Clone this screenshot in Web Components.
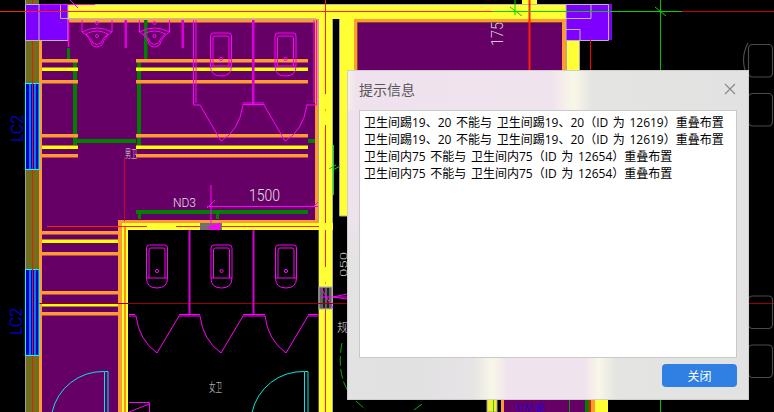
<!DOCTYPE html>
<html lang="zh">
<head>
<meta charset="utf-8">
<title>提示信息</title>
<style>
  html, body { margin: 0; padding: 0; background: #000; }
  body { width: 774px; height: 412px; overflow: hidden; position: relative; font-family: "Open Sans", "Noto Sans CJK SC", sans-serif; }
</style>
</head>
<body>
<cad-drawing></cad-drawing>
<notice-dialog>
  <span slot="title">提示信息</span>
  <message-line>卫生间踢19、20 不能与 卫生间踢19、20（ID 为 12619）重叠布置</message-line>
  <message-line>卫生间踢19、20 不能与 卫生间踢19、20（ID 为 12619）重叠布置</message-line>
  <message-line>卫生间内75 不能与 卫生间内75（ID 为 12654）重叠布置</message-line>
  <message-line>卫生间内75 不能与 卫生间内75（ID 为 12654）重叠布置</message-line>
  <blue-button slot="actions">关闭</blue-button>
</notice-dialog>

<script>
class CadDrawing extends HTMLElement {
  constructor() {
    super()
    this.attachShadow({ mode: 'open' })
    this.shadowRoot.innerHTML = /* html */ `
      <style>
        :host { display: block; width: 774px; height: 412px; }
        svg { display: block; }
        text { font-family: Roboto, "Noto Sans CJK SC", sans-serif; font-weight: 300; }
        .thin { fill: none; stroke: #ff00ff; stroke-width: 1; }
        .orange { fill: #ff9933; }
        .yellow { fill: #ffff00; }
        .wall { fill: #ffff33; }
        .room { fill: #660066; }
        .green { fill: #008000; }
      </style>
      <svg width="774" height="412" viewBox="0 0 774 412">
        <defs>
          <g id="win">
            <rect x="25.5" y="0.5" width="13.5" height="86" fill="#0000c8" stroke="#00ffff"/>
            <path d="M30 0v86M35 0v86" stroke="#00ffff"/>
            <path d="M32.5 0v86" stroke="#ff0033"/>
          </g>
          <g id="urinal" class="thin">
            <path d="M-10.5 3a3 3 0 0 1 3-3h15a3 3 0 0 1 3 3v30q0 10-10.500 10t-10.500-10z"/>
            <path d="M-10.500 33h21"/>
            <path d="M-8 33v-28a2 2 0 0 1 2-2h12a2 2 0 0 1 2 2v28"/>
            <circle cx="0" cy="26" r="1.600"/>
          </g>
          <g id="sink" class="thin">
            <path d="M-15 0v12M15 0v12"/>
            <path d="M-15 12q15-8 30 0q-7 4-10 13q-5 4-10 0q-3-9-10-13z"/>
            <path d="M-11 14q11-6 22 0q-5 3-7 9q-4 3-8 0q-2-6-7-9z"/>
            <circle cx="0" cy="3" r="1.500"/>
            <circle cx="0" cy="16" r="1.500"/>
          </g>
          <path id="stall" class="thin" d="M0 0q3 24 21 37l22-37"/>
          <path id="stall2" class="thin" d="M0 0l21 36q18-10 22-36"/>
        </defs>

        <rect width="774" height="412" fill="#000"/>

        <!-- left outer wall -->
        <rect x="25" y="0" width="14" height="412" fill="#6f6f1f"/>
        <path d="M25.500 0v412" stroke="#a0a0a0"/>
        <path d="M32.500 0v412" stroke="#e02000"/>
        <rect x="39" y="20" width="3.500" height="392" class="orange"/>

        <!-- upper room -->
        <rect x="42" y="20" width="274" height="200" class="room"/>
        <rect x="42" y="220" width="76" height="192" class="room"/>
        <rect x="68" y="19" width="250" height="3.500" class="orange"/>
        <rect x="315" y="12" width="3.500" height="212" class="orange"/>

        <!-- green stud walls -->
        <rect x="67" y="48" width="3" height="12" class="green"/>
        <rect x="144" y="20" width="3.500" height="40" class="green"/>
        <rect x="73" y="62" width="4" height="83" class="green"/>
        <rect x="137" y="62" width="4" height="86" class="green"/>
        <rect x="77" y="139" width="59" height="4" class="green"/>
        <rect x="308" y="139" width="7" height="4" class="green"/>
        <rect x="136" y="210" width="172" height="4" class="green"/>
        <rect x="138" y="214" width="3" height="5" class="green"/>
        <rect x="216" y="214" width="3" height="5" class="green"/>

        <!-- partition bars -->
        <rect x="42" y="59" width="36" height="3.500" class="orange"/>
        <rect x="136" y="59" width="172" height="3.500" class="orange"/>
        <rect x="42" y="67.500" width="36" height="3.500" class="yellow"/>
        <rect x="136" y="67.500" width="172" height="3.500" class="yellow"/>
        <rect x="42" y="80" width="36" height="3.500" class="orange"/>
        <rect x="136" y="80" width="172" height="3.500" class="orange"/>
        <rect x="42" y="134" width="36" height="3.500" class="orange"/>
        <rect x="136" y="134" width="172" height="3.500" class="orange"/>
        <rect x="42" y="145.500" width="36" height="3.500" class="yellow"/>
        <rect x="136" y="145.500" width="172" height="3.500" class="yellow"/>
        <rect x="42" y="154" width="36" height="3.500" class="orange"/>
        <rect x="136" y="154" width="172" height="3.500" class="orange"/>

        <!-- lower-left bars -->
        <rect x="42" y="231" width="76" height="3.500" class="orange"/>
        <rect x="42" y="239.500" width="76" height="3.500" class="yellow"/>
        <rect x="42" y="252" width="76" height="3.500" class="orange"/>
        <rect x="42" y="291" width="76" height="3.500" class="orange"/>
        <rect x="42" y="303" width="76" height="3.500" class="yellow"/>
        <rect x="42" y="312" width="76" height="3.500" class="orange"/>

        <!-- top wall -->
        <rect x="68" y="4" width="262" height="15" class="wall"/>
        <path d="M68 4.500h262M68 18.500h248" stroke="#b8b8b8"/>
        <rect x="25" y="4" width="43" height="36" fill="#8000ff"/>
        <path d="M25.500 4.500h42.500v36h-42.500zM39 4v36M60.500 4.500v14h7.500" fill="none" stroke="#b8b8b8"/>
        <path d="M40 4.500h55M70 0l8 8" stroke="#ff00ff"/>

        <!-- right wall of left block -->
        <rect x="318.500" y="19" width="14.500" height="393" class="wall"/>
        <path d="M318.500 19v393M332.500 19v393" stroke="#a8a8a8"/>
        <path d="M325.500 0v94M325.500 125v142M325.500 309v103" stroke="#ff2000"/>
        <path d="M325 110h1M325 283h1" stroke="#ff9933" stroke-width="2"/>

        <!-- middle block -->
        <rect x="330" y="4" width="236" height="15" class="wall"/>
        <rect x="339" y="19" width="15" height="197" class="wall"/>
        <path d="M339.500 19v197h8" fill="none" stroke="#a8a8a8"/>
        <rect x="354" y="19" width="212" height="3.500" class="orange"/>
        <rect x="354" y="19" width="3.500" height="60" class="orange"/>
        <rect x="358" y="23" width="204" height="60" class="room"/>
        <rect x="562" y="19" width="4" height="60" class="orange"/>
        <rect x="566" y="19" width="14" height="60" class="wall"/>
        <path d="M579.500 40v40M566.500 19v60" stroke="#a8a8a8"/>
        <path d="M330 4.500h236" stroke="#b8b8b8"/>
        <rect x="522" y="0" width="15" height="4" class="wall"/>
        <path d="M529.500 0v80" stroke="#ff2000" stroke-width="2"/>
        <rect x="566" y="4" width="46" height="36" fill="#8000ff"/>
        <path d="M566 4.500h42.500v36h-42.500zM591 4.500v14h-25M566 29.500h14v11" fill="none" stroke="#b8b8b8"/>
        <path d="M590.500 40v40" stroke="#ff0000"/>

        <!-- lower room -->
        <rect x="118" y="220" width="200" height="3.500" class="orange"/>
        <rect x="118" y="223" width="215" height="7" class="wall"/>
        <rect x="118" y="223" width="4" height="189" class="orange"/>
        <rect x="122" y="223" width="6" height="189" class="wall"/>
        <path d="M125 226v186" stroke="#ff2000"/>
        <rect x="128" y="230" width="190.500" height="182" fill="#000"/>
        <path d="M47 226.500h100M176 226.500h143" stroke="#ff2000"/>
        <rect x="200" y="223" width="22" height="7" fill="#707070"/>
        <path d="M207 228l13-5-1 7zM211 185v40" stroke="#ff00ff" fill="#ff00ff"/>
        <rect x="319" y="287" width="13" height="22" fill="#606060" stroke="#b0b0b0"/>
        <path d="M324 288v20M328 288v20" stroke="#202020" stroke-width="2"/>
        <path d="M321 288l12 20M333 297l14-3M333 297l14 2M321 297h26" stroke="#ff00ff" fill="none"/>

        <!-- red and green axis lines -->
        <path d="M0 11.500h493" stroke="#ff2000"/>
        <path d="M682 11.500h92" stroke="#cc0000"/>
        <path d="M493 11.500h189" stroke="#00d000"/>
        <path d="M660.500 0v80M660.500 395v17" stroke="#00c000"/>
        <path d="M515 0v15M510 7l12 9M655 7l11 9" stroke="#00d000" fill="none"/>
        <path d="M32 303.500h315M748 303.500h26" stroke="#990000"/>
        <path d="M124.500 157v64" stroke="#cc0033"/>
        <path d="M333.500 145v50M329 169l7-4M333 170l7-4" stroke="#00e000" fill="none"/>

        <!-- windows -->
        <use href="#win" y="83"/>
        <use href="#win" y="269"/>

        <!-- sinks and urinals -->
        <use href="#sink" x="97" y="20"/>
        <use href="#sink" x="154.500" y="20"/>
        <path d="M68.500 20v27" stroke="#ff00ff" stroke-width="1.500"/>
        <rect x="124.500" y="20" width="2.500" height="28" fill="#d800d8"/>
        <rect x="181.500" y="20" width="2.500" height="28" fill="#d800d8"/>
        <use href="#urinal" x="221" y="33"/>
        <use href="#urinal" x="285.500" y="33"/>
        <rect x="252" y="20" width="2.500" height="84" fill="#d800d8"/>
        <path class="thin" d="M193.500 20v85h6.500M196 20v83"/>
        <path class="thin" d="M316.500 20v85h-10.500M314 20v83"/>
        <path class="thin" d="M242.500 104.500h22M243 103h21"/>
        <use href="#stall2" x="200" y="105"/>
        <use href="#stall2" x="264" y="105"/>

        <use href="#urinal" x="157" y="245"/>
        <use href="#urinal" x="221.500" y="245"/>
        <use href="#urinal" x="286" y="245"/>
        <rect x="188.500" y="230" width="2" height="85" fill="#d800d8"/>
        <rect x="252.500" y="230" width="2" height="85" fill="#d800d8"/>
        <path class="thin" d="M129 316h7M179 316h21M243 316h22M308 316h10.500M129 314.500h6M179 314.500h21M243 314.500h22M308 314.500h10.500"/>
        <use href="#stall" x="136" y="316"/>
        <use href="#stall" x="200" y="316"/>
        <use href="#stall" x="265" y="316"/>
        <path class="thin" d="M129 402.500h20.500v10M129 412l20-8"/>

        <!-- doors -->
        <path d="M104.500 371.500h3.500v41M104.500 371.500v41M104 371.500a52 52 0 0 0-52 41" fill="none" stroke="#00e8e8"/>
        <path d="M304.500 371.500h3.500v41M304.500 371.500v41M304 371.500a52 52 0 0 0-52 41" fill="none" stroke="#00e8e8"/>

        <!-- dimension -->
        <path d="M207 206.500h111M215 200l-8 8M318 202l-5 5" stroke="#ff00ff" fill="none"/>
        <text x="249" y="201" font-size="17" fill="#e0e0e0" textLength="31" lengthAdjust="spacingAndGlyphs">1500</text>
        <text x="173" y="207" font-size="13" fill="#e0e0e0" textLength="23" lengthAdjust="spacingAndGlyphs">ND3</text>
        <text x="125" y="158" font-size="11" fill="#e0e0e0" textLength="12" lengthAdjust="spacingAndGlyphs">男卫</text>
        <text x="209" y="392" font-size="12" fill="#e8e8e8" textLength="13" lengthAdjust="spacingAndGlyphs">女卫</text>
        <text x="337" y="332" font-size="12" fill="#d8d8d8">规</text>
        <text transform="translate(503 46) rotate(-90)" font-size="17" fill="#cfcfcf" textLength="24" lengthAdjust="spacingAndGlyphs">175</text>
        <text transform="translate(347 277) rotate(-90)" font-size="9" fill="#cfcfcf" textLength="25" lengthAdjust="spacingAndGlyphs">050</text>
        <text transform="translate(23 142) rotate(-90)" font-size="17" fill="#0000ff" textLength="27" lengthAdjust="spacingAndGlyphs">LC2</text>
        <text transform="translate(22 335) rotate(-90)" font-size="17" fill="#0000ff" textLength="27" lengthAdjust="spacingAndGlyphs">LC2</text>

        <!-- green arc behind the dialog -->
        <path d="M342 343q-4 20 1 37q3 10 12 20M356 401l10 9M414 410l8-6" fill="none" stroke="#00b000" stroke-dasharray="10 3"/>

        <!-- right side fixtures -->
        <g fill="none" stroke="#4a4a4a" stroke-width="1.200">
          <rect x="748.500" y="44.500" width="24" height="32.500" rx="4"/>
          <rect x="748.500" y="93.500" width="24" height="32.500" rx="4"/>
          <rect x="748.500" y="296" width="24" height="32.500" rx="4"/>
          <rect x="748.500" y="345" width="24" height="32.500" rx="4"/>
          <path d="M748 43q-9 17 0 34"/>
        </g>

        <!-- bottom strip under the dialog -->
        <rect x="487" y="395" width="10" height="17" fill="#f0f030" stroke="#a0a0a0"/>
        <path d="M493.500 395v17" stroke="#40c000"/>
        <rect x="501" y="395" width="3" height="17" class="orange"/>
        <rect x="504" y="395" width="81" height="17" class="room"/>
        <path d="M569.500 395v17" stroke="#00a000"/>
        <rect x="585" y="395" width="4" height="17" class="green"/>
        <rect x="589" y="395" width="2" height="17" fill="#e02000"/>
        <rect x="591" y="395" width="4" height="17" class="orange"/>
        <rect x="595" y="395" width="13" height="17" class="wall"/>
        <text x="516" y="411" font-size="9" fill="#0000ff" textLength="29" lengthAdjust="spacingAndGlyphs">C M 部</text>
      </svg>
    `
  }
}

class NoticeDialog extends HTMLElement {
  constructor() {
    super()
    this.attachShadow({ mode: 'open' })
    this.shadowRoot.innerHTML = /* html */ `
      <style>
        :host {
          position: absolute;
          left: 347px;
          top: 70px;
          width: 402px;
          height: 330px;
          box-sizing: border-box;
          display: flex;
          flex-direction: column;
          border: 1px solid #cfcfcf;
          background:
            linear-gradient(180deg, #efe2ee 0, #efe2ee 40%, #e3e3e3 60%) left / 12px 100% no-repeat,
            #e2e2e2;
          font-family: "Open Sans", "Noto Sans CJK SC", sans-serif;
        }
        .header {
          height: 36px;
          padding: 0 12px 3px 11px;
          display: flex;
          align-items: center;
          justify-content: space-between;
          font-size: 14px;
          color: #555;
          background: linear-gradient(90deg, #f5efe6 0, #efe2ee 8px, #efe3ee 203px, #f9f7e7 226px, #e4e4e2 244px, #e2e2e2 100%);
        }
        .close { display: block; }
        .content {
          flex: 1;
          margin: 0 11px;
          padding: 3px 4px;
          background: #fff;
          border: 1px solid #c9c9c9;
        }
        .footer {
          height: 41px;
          box-sizing: border-box;
          padding: 6px 11px 0;
          display: flex;
          justify-content: flex-end;
          align-items: flex-start;
          background: linear-gradient(90deg, #e2e2e2 0, #e1e1e1 60px, #e4e2e4 100px, #e6e4e5 125px, #f8f7e6 144px, #efe3ee 160px, #efe3ee 236px, #f9f7e7 251px, #e4e4e2 268px, #e2e2e2 100%);
        }
      </style>
      <header class="header">
        <slot name="title"></slot>
        <svg class="close" width="12" height="12" viewBox="0 0 12 12">
          <path d="M1 1l10 10M11 1L1 11" stroke="#8a8a8a" stroke-width="1.200" fill="none"/>
        </svg>
      </header>
      <section class="content"><slot></slot></section>
      <footer class="footer"><slot name="actions"></slot></footer>
    `
  }
}

class MessageLine extends HTMLElement {
  constructor() {
    super()
    this.attachShadow({ mode: 'open' })
    this.shadowRoot.innerHTML = /* html */ `
      <style>
        :host {
          display: block;
          font-size: 12px;
          line-height: 17px;
          word-spacing: 1.5px;
          color: #000;
          white-space: nowrap;
        }
      </style>
      <slot></slot>
    `
  }
}

class BlueButton extends HTMLElement {
  constructor() {
    super()
    this.attachShadow({ mode: 'open' })
    this.shadowRoot.innerHTML = /* html */ `
      <style>
        :host {
          display: flex;
          align-items: center;
          justify-content: center;
          width: 75px;
          height: 23px;
          border-radius: 4px;
          background: #2f80e2;
          color: #fff;
          font-size: 12px;
        }
      </style>
      <slot></slot>
    `
  }
}

customElements.define('cad-drawing', CadDrawing)
customElements.define('notice-dialog', NoticeDialog)
customElements.define('message-line', MessageLine)
customElements.define('blue-button', BlueButton)
</script>
</body>
</html>
